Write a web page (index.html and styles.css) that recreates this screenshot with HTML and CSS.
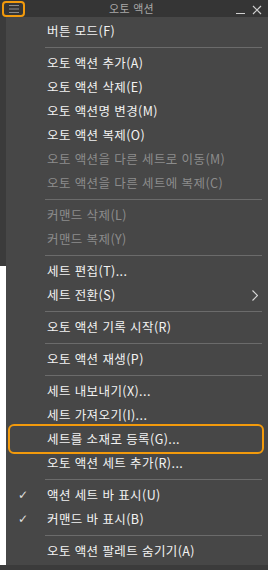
FILE: index.html
```html
<!DOCTYPE html>
<html lang="ko">
<head>
    <meta charset="UTF-8">
    <title>오토 액션</title>
    <link rel="stylesheet" href="styles.css">
</head>
<body>
    <div class="title-bar">
        <button class="menu-button">
            <svg width="10" height="8" viewBox="0 0 10 8">
                <path d="M0 0.5h10M0 4h10M0 7.5h10" stroke="#8c8c8c" stroke-width="1"/>
            </svg>
        </button>
        <span class="title">오토 액션</span>
        <div class="window-controls">
            <svg width="10" height="10" viewBox="0 0 10 10">
                <path d="M0 8.5h9" stroke="#cfcfcf" stroke-width="1"/>
            </svg>
            <svg width="10" height="10" viewBox="0 0 10 10">
                <path d="M1 1l8 8M9 1l-8 8" stroke="#cfcfcf" stroke-width="1.2"/>
            </svg>
        </div>
    </div>
    <div class="workspace">
        <div class="side-strip">
            <div class="side-dark"></div>
        </div>
        <ul class="popup-menu">
            <li class="item">버튼 모드(F)</li>
            <li class="separator"></li>
            <li class="item">오토 액션 추가(A)</li>
            <li class="item">오토 액션 삭제(E)</li>
            <li class="item">오토 액션명 변경(M)</li>
            <li class="item">오토 액션 복제(O)</li>
            <li class="item disabled">오토 액션을 다른 세트로 이동(M)</li>
            <li class="item disabled">오토 액션을 다른 세트에 복제(C)</li>
            <li class="separator"></li>
            <li class="item disabled">커맨드 삭제(L)</li>
            <li class="item disabled">커맨드 복제(Y)</li>
            <li class="separator"></li>
            <li class="item">세트 편집(T)...</li>
            <li class="item submenu">세트 전환(S)
                <svg class="arrow" width="6" height="11" viewBox="0 0 6 11">
                    <path d="M0.5 0.5l5 5-5 5" fill="none" stroke="#d8d8d8" stroke-width="1.2"/>
                </svg>
            </li>
            <li class="separator"></li>
            <li class="item">오토 액션 기록 시작(R)</li>
            <li class="separator"></li>
            <li class="item">오토 액션 재생(P)</li>
            <li class="separator"></li>
            <li class="item">세트 내보내기(X)...</li>
            <li class="item">세트 가져오기(I)...</li>
            <li class="item highlighted">세트를 소재로 등록(G)...</li>
            <li class="item">오토 액션 세트 추가(R)...</li>
            <li class="separator"></li>
            <li class="item checked">액션 세트 바 표시(U)</li>
            <li class="item checked">커맨드 바 표시(B)</li>
            <li class="separator"></li>
            <li class="item">오토 액션 팔레트 숨기기(A)</li>
        </ul>
    </div>
    <div class="bottom-edge"></div>
</body>
</html>
```

FILE: styles.css
```css
body {
    margin: 0;
    width: 268px;
    height: 570px;
    background-color: #ffffff;
    font-family: "Noto Sans CJK KR", "Noto Sans", sans-serif;
    overflow: hidden;
}
.title-bar {
    height: 17px;
    background-color: #353535;
    display: flex;
    align-items: center;
    position: relative;
}
.menu-button {
    width: 23px;
    height: 16px;
    margin-left: 2px;
    padding: 0;
    border: 2px solid #f29a0c;
    border-radius: 4px;
    background: none;
    display: flex;
    align-items: center;
    justify-content: center;
    box-sizing: border-box;
}
.title {
    flex: 1;
    text-align: center;
    font-size: 11px;
    letter-spacing: 0.3px;
    color: #a8a8a8;
    line-height: 17px;
    margin-left: 2px;
}
.window-controls {
    display: flex;
    gap: 6px;
    margin-right: 6px;
    margin-top: 2px;
}
.workspace {
    display: flex;
    height: 548px;
}
.side-strip {
    width: 6px;
    background-color: #ffffff;
}
.side-dark {
    height: 249px;
    background-color: #3b3b3b;
}
.popup-menu {
    list-style: none;
    margin: 0;
    padding: 2px 0;
    flex: 1;
    background-color: #474747;
}
.item {
    height: 24px;
    line-height: 24px;
    padding-left: 41px;
    font-size: 12.5px;
    letter-spacing: 0.4px;
    color: #f2f2f2;
    position: relative;
    white-space: nowrap;
}
.item.disabled {
    color: #8c8c8c;
}
.separator {
    height: 8px;
    display: flex;
    align-items: center;
    padding-left: 39px;
    padding-right: 6px;
}
.separator::before {
    content: "";
    flex: 1;
    height: 1px;
    background-color: #6b6b6b;
}
.arrow {
    position: absolute;
    right: 10px;
    top: 7px;
}
.checked::before {
    content: "✓";
    position: absolute;
    left: 12px;
    top: 0;
    font-size: 12px;
    color: #e0e0e0;
    font-family: "DejaVu Sans", sans-serif;
}
.highlighted::after {
    content: "";
    position: absolute;
    left: 2px;
    right: 4px;
    top: -3px;
    bottom: -3px;
    border: 2px solid #f29a0c;
    border-radius: 6px;
}
.bottom-edge {
    height: 5px;
    background-color: #3b3b3b;
}
```
